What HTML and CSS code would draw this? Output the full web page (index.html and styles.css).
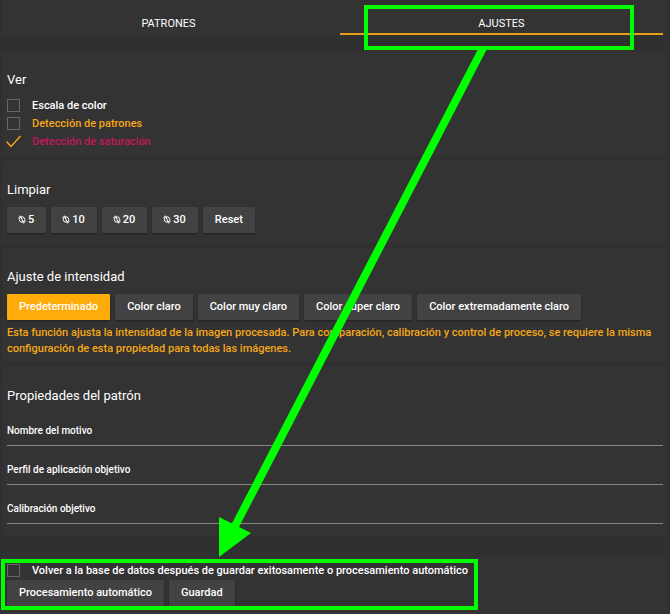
FILE: index.html
```html
<!DOCTYPE html>
<html lang="es">
<head>
  <meta charset="UTF-8">
  <meta name="viewport" content="width=device-width, initial-scale=1.0">
  <title>Ajustes</title>
  <link rel="stylesheet" href="styles.css">
</head>
<body>
  <!-- Icono reutilizado en los botones de limpiar -->
  <svg class="sprite" aria-hidden="true">
    <symbol id="icon-clean" viewBox="0 0 8 9">
      <ellipse cx="4" cy="4.5" rx="2.7" ry="2.7" fill="none" stroke="currentColor" stroke-width="1"/>
      <path d="M0.3 3 L2 1.4 M2.4 0.6 L5.6 8.4 M6 7.6 L7.7 6" fill="none" stroke="currentColor" stroke-width="1"/>
    </symbol>
  </svg>

  <nav class="tabs">
    <button type="button" class="tab">PATRONES</button>
    <button type="button" class="tab active">AJUSTES</button>
  </nav>

  <main>
    <section class="panel">
      <h2>Ver</h2>
      <label class="check"><input type="checkbox"> Escala de color</label>
      <label class="check pattern"><input type="checkbox"> Detección de patrones</label>
      <label class="check saturation"><input type="checkbox" checked> Detección de saturación</label>
    </section>

    <section class="panel">
      <h2>Limpiar</h2>
      <div class="buttons">
        <button type="button" class="btn"><svg class="icon"><use href="#icon-clean"/></svg>5</button>
        <button type="button" class="btn"><svg class="icon"><use href="#icon-clean"/></svg>10</button>
        <button type="button" class="btn"><svg class="icon"><use href="#icon-clean"/></svg>20</button>
        <button type="button" class="btn"><svg class="icon"><use href="#icon-clean"/></svg>30</button>
        <button type="button" class="btn">Reset</button>
      </div>
    </section>

    <section class="panel">
      <h2>Ajuste de intensidad</h2>
      <div class="buttons">
        <button type="button" class="btn selected">Predeterminado</button>
        <button type="button" class="btn">Color claro</button>
        <button type="button" class="btn">Color muy claro</button>
        <button type="button" class="btn">Color súper claro</button>
        <button type="button" class="btn">Color extremadamente claro</button>
      </div>
      <p class="hint">Esta función ajusta la intensidad de la imagen procesada. Para comparación, calibración y control de proceso, se requiere la misma configuración de esta propiedad para todas las imágenes.</p>
    </section>

    <section class="panel">
      <h2>Propiedades del patrón</h2>
      <div class="field">
        <label for="motivo">Nombre del motivo</label>
        <input type="text" id="motivo">
      </div>
      <div class="field">
        <label for="perfil">Perfil de aplicación objetivo</label>
        <input type="text" id="perfil">
      </div>
      <div class="field">
        <label for="calibracion">Calibración objetivo</label>
        <input type="text" id="calibracion">
      </div>
    </section>

    <section class="panel actions">
      <label class="check"><input type="checkbox"> Volver a la base de datos después de guardar exitosamente o procesamiento automático</label>
      <div class="buttons">
        <button type="button" class="btn">Procesamiento automático</button>
        <button type="button" class="btn">Guardad</button>
      </div>
    </section>
  </main>

  <!-- Marcas de ayuda sobre la interfaz -->
  <svg class="marks" width="670" height="614" viewBox="0 0 670 614" aria-hidden="true">
    <rect x="366" y="7" width="266" height="41"/>
    <rect x="3" y="561" width="473" height="47"/>
    <path d="M483 48 L234 528"/>
    <polygon points="219,517 251,533 219,557"/>
  </svg>
</body>
</html>
```
FILE: styles.css
```css
* {
  margin: 0;
  padding: 0;
  box-sizing: border-box;
}
body {
  position: relative;
  background: #303030;
  color: #fff;
  font-family: Roboto, sans-serif;
  font-size: 11px;
  font-weight: 500;
  line-height: 16px;
}
button,
input {
  font: inherit;
  color: inherit;
}
button {
  border: none;
  cursor: pointer;
}
.sprite {
  position: absolute;
  width: 0;
  height: 0;
}

/* Pestañas */
.tabs {
  display: flex;
  gap: 10px;
  margin: 0 2px 16px;
  padding: 0 5px;
  background: #333;
}
.tab {
  flex: 1;
  padding: 16px 0 1px;
  background: none;
  border-bottom: 2px solid transparent;
  font-weight: 400;
}
.tab.active {
  border-color: #e79f17;
}

/* Paneles */
.panel {
  margin: 0 2px 5px;
  padding: 21px 5px 5px;
  background: #333;
}
h2 {
  margin-bottom: 9px;
  font-size: 13px;
  font-weight: 400;
}

/* Casillas */
.check {
  display: flex;
  align-items: center;
  gap: 12px;
  height: 18px;
}
.check input {
  appearance: none;
  width: 13px;
  height: 13px;
  margin-bottom: 2px;
  border: 1px solid #666;
}
.check input:checked {
  width: 15px;
  margin: 0 -1px 2px;
  border: none;
  background: url("data:image/svg+xml,%3Csvg xmlns='http://www.w3.org/2000/svg' viewBox='0 0 15 13'%3E%3Cpath d='M.5 6.5 5 11.5 14.5 1' fill='none' stroke='%23f5a716' stroke-width='1.4'/%3E%3C/svg%3E") no-repeat center;
}
.pattern {
  color: #f5a716;
}
.saturation {
  color: #c2185b;
}

/* Botones */
.buttons {
  display: flex;
  flex-wrap: wrap;
  gap: 5px;
  margin-bottom: 5px;
}
.btn {
  height: 26px;
  padding: 0 12px;
  background: #424242;
  border-radius: 1px;
  box-shadow: 0 1px 2px rgba(0,0,0,0.4);
}
.btn.selected {
  background: #ffab0a;
}
.icon {
  width: 8px;
  height: 9px;
  margin: 0 2px 0 -1px;
  vertical-align: -1px;
}
.hint {
  color: #f5a716;
}

/* Campos de texto */
.field {
  display: grid;
  margin-bottom: 6px;
}
.field label,
.field input {
  grid-area: 1 / 1;
}
.field label {
  padding-top: 10px;
  font-size: 10px;
  pointer-events: none;
}
.field input {
  width: 100%;
  height: 33px;
  background: none;
  border: none;
  border-bottom: 1px solid #858585;
  outline: none;
}

.actions {
  margin: 22px 2px 0;
  padding-top: 5px;
}

.marks {
  position: absolute;
  top: 0;
  left: 0;
  fill: none;
  stroke: #00ff00;
  stroke-width: 4px;
  pointer-events: none;
}
.marks path {
  stroke-width: 8px;
}
.marks polygon {
  fill: #00ff00;
  stroke: none;
}
```
